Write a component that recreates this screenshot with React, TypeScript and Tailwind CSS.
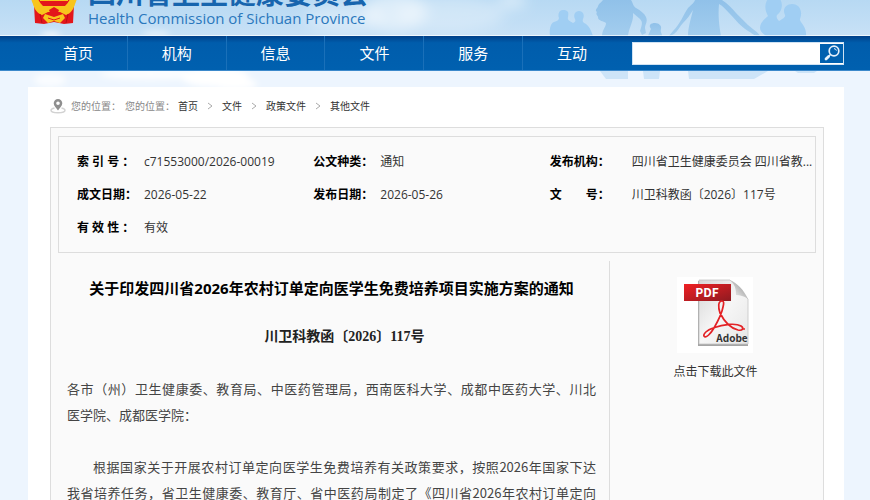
import React from "react";

const navItems = ["首页", "机构", "信息", "文件", "服务", "互动"];
const crumbs = ["首页", "文件", "政策文件", "其他文件"];

function SkyScene() {
  return (
    <svg
      aria-hidden="true"
      className="absolute inset-x-0 top-0 h-[87px] w-full"
      viewBox="0 0 870 87"
      preserveAspectRatio="xMidYMin slice"
    >
      <defs>
        <linearGradient id="sky" x1="0" y1="0" x2="0" y2="1">
          <stop offset="0" stopColor="#b7d9f3" />
          <stop offset="1" stopColor="#c8e1f6" />
        </linearGradient>
        <linearGradient id="figure" x1="0" y1="0" x2="0" y2="1">
          <stop offset="0" stopColor="#90c1e9" />
          <stop offset="1" stopColor="#a3cdee" />
        </linearGradient>
        <filter id="soft" x="-30%" y="-60%" width="160%" height="220%">
          <feGaussianBlur stdDeviation="7" />
        </filter>
        <filter id="wisp" x="-30%" y="-60%" width="160%" height="220%">
          <feGaussianBlur stdDeviation="3" />
        </filter>
        <clipPath id="skyClip">
          <rect width="870" height="36" />
        </clipPath>
      </defs>
      <rect width="870" height="87" fill="#edf5fe" />
      <g filter="url(#wisp)" fill="#ffffff">
        <ellipse cx="50" cy="80" rx="16" ry="7" opacity="0.7" />
        <ellipse cx="150" cy="74" rx="50" ry="6" opacity="0.8" />
        <ellipse cx="215" cy="77" rx="34" ry="10" />
        <ellipse cx="235" cy="84" rx="22" ry="6" />
      </g>
      <g clipPath="url(#skyClip)">
        <rect width="870" height="36" fill="url(#sky)" />
        <g filter="url(#wisp)" fill="#ffffff">
          <ellipse cx="51" cy="35" rx="10" ry="3" opacity="0.8" />
          <ellipse cx="156" cy="34" rx="14" ry="3" opacity="0.6" />
        </g>
        <g filter="url(#soft)" fill="#ffffff">
          <ellipse cx="345" cy="18" rx="40" ry="14" opacity="0.35" />
          <ellipse cx="395" cy="12" rx="32" ry="20" opacity="0.5" />
          <ellipse cx="450" cy="14" rx="55" ry="18" opacity="0.3" />
          <ellipse cx="512" cy="1" rx="14" ry="7" opacity="0.5" />
        </g>
      </g>
      <g fill="#a0cef3">
        <path d="M550 36c-1-8 1-13 4-14 3-1 5-2 5-4-1-2-1-8 4-8s6 2 5 7c-1 3 2 4 5 6 2-1 3-2 2-4-2-4 0-8 4-8s6 4 4 8c-1 3 1 4 3 5 3 2 5 6 7 12z" />
        <path d="M760 28c0-6 5-9 8-12-4-7-3-13 0-17h12c4 6 1 13-3 16-1 2 0 4 2 6 3-2 7-4 6-6-3-6 1-11 7-11 8 0 11 8 8 15-1 3 7 7 6 17h-40c-3-2-6-5-6-8z" />
      </g>
      <g fill="url(#figure)">
        <path d="M602 36c0-6 4-9 4-13-3-2-7-2-8-5 1-2-3-3-1-6-3-2 1-4 1-6 1-3 4-4 5-6h28c2 3 2 6 5 8 5 3 8 5 10 9 2 5-1 7-1 11l1 5-4 2-2-4c2-6 3-9 0-12l-7-6c1 8-4 14-5 23z" />
        <path d="M648 36c1-3 2-5 3-7-3-4 0-6 4-6s7 3 6 6c-1 3 1 4 1 7z" />
        <path d="M688 36c0-9 3-17 5-26-3 5-6 9-10 13-3 3-5 8-9 11l-6 3 5-6c8-8 10-16 15-23 4-4 6-5 7-8h27c6 4 10 8 14 13l12 12c6 5 11 8 12 11-5 1-8-3-12-5-8-5-12-11-18-17-4-4-7-8-11-10-1 12 0 20 2 32z" />
      </g>
      <g fill="#cde4f8">
        <path d="M600 71h28v8h-22z" />
        <path d="M643 71h17l-1 8h-15z" />
        <path d="M688 71h80l-14 8h-65z" />
        <path d="M795 71h22l-3 2h-16z" />
      </g>
    </svg>
  );
}

function Emblem() {
  return (
    <svg aria-hidden="true" className="h-14 w-12 shrink-0" viewBox="0 0 48 56">
      <path d="M0 22a24 24 0 0 1 48 0c0 9-3 15-7 21H7C3 37 0 31 0 22z" fill="#f8c51c" />
      <path d="M6 22a18 18 0 0 1 36 0c0 7-3 12-7 16H13C9 34 6 29 6 22z" fill="#e3161b" />
      <path d="M10 30h28v3H10z" fill="#f8c51c" />
      <path d="M4 37l5 4h30l5-4-1 18-9 1-10-2-10 2-9-1z" fill="#e3161b" />
      <path d="M3 35c6 2 9 6 15 6h12c6 0 9-4 15-6-1 6-4 10-9 12l-6-3H18l-6 3c-5-2-8-6-9-12z" fill="#f8c51c" />
      <path d="M19 42l5-3 5 3-2 5h-6z" fill="#e3161b" />
      <path d="M15 46l9 3 9-3 2 4-5 5-6-2-6 2-5-5z" fill="#f8c51c" />
      <path d="M18 50l6 2 6-2" fill="none" stroke="#e3161b" strokeWidth="1" />
      <path d="M10 46l2 9M38 46l-2 9" stroke="#b90f14" strokeWidth="1" />
    </svg>
  );
}

function SearchIcon() {
  return (
    <svg aria-hidden="true" className="h-4 w-4" viewBox="0 0 16 16" fill="none" stroke="#e6f1fb">
      <circle cx="10" cy="6" r="4.800" strokeWidth="1.700" />
      <path d="M6.300 9.700L5 11" strokeWidth="1.500" />
      <path d="M4.600 11.400L2 14" strokeWidth="2.800" strokeLinecap="round" />
      <path d="M10 3.600a2.500 2.500 0 0 1 2.400 2" strokeWidth="1" />
    </svg>
  );
}

function PinIcon() {
  return (
    <svg aria-hidden="true" className="h-4 w-4" viewBox="0 0 16 16">
      <path d="M4.500 10C2.500 10.500 1 11.300 1 12.300c0 1.500 3 2.500 7 2.500s7-1 7-2.500c0-1-1.500-1.800-3.500-2.300" fill="none" stroke="#d2d2d2" strokeWidth="1.400" />
      <path fillRule="evenodd" d="M8 1a4.300 4.300 0 0 1 4.300 4.300C12.300 8 9.500 10 8 12.500 6.500 10 3.700 8 3.700 5.300A4.300 4.300 0 0 1 8 1zm0 2.500a1.800 1.800 0 1 0 0 3.600 1.800 1.800 0 0 0 0-3.600z" fill="#8f8f8f" />
    </svg>
  );
}

function PdfIcon() {
  return (
    <svg aria-hidden="true" className="h-[76px] w-[76px]" viewBox="0 0 76 76">
      <defs>
        <linearGradient id="paper" x1="0" y1="0" x2="1" y2="1">
          <stop offset="0" stopColor="#d6d6d6" />
          <stop offset="0.5" stopColor="#f6f6f6" />
          <stop offset="1" stopColor="#e6e6e6" />
        </linearGradient>
        <linearGradient id="band" x1="0" y1="0" x2="1" y2="1">
          <stop offset="0" stopColor="#f02024" />
          <stop offset="1" stopColor="#8e1a20" />
        </linearGradient>
        <linearGradient id="fold" x1="0" y1="1" x2="1" y2="0">
          <stop offset="0" stopColor="#ffffff" />
          <stop offset="1" stopColor="#858585" />
        </linearGradient>
      </defs>
      <rect width="76" height="76" fill="#fff" />
      <path d="M21 4h32l18 19v46H21z" fill="#a5a5a5" />
      <path d="M22 3h31l18 19v45H22z" fill="url(#paper)" stroke="#c4c4c4" strokeWidth="0.800" />
      <path d="M53 3c7 3 14 10 18 19-4-3-8-4-12-4 0-6-1-11-6-15z" fill="url(#fold)" />
      <rect x="7" y="7" width="47" height="17" fill="url(#band)" />
      <text x="30" y="20" textAnchor="middle" fontFamily="Noto Sans CJK SC, sans-serif" fontWeight="700" fontSize="12" fill="#fff">PDF</text>
      <path d="M45 24c-4 0-4 6-2 12 4 8 10 15 18 17 5 1 6-2 3-4-5-3-17-2-28 2-6 2-10 6-9 8 2 3 7-3 10-8 4-7 8-15 9-21 1-4 1-6-1-6z" fill="none" stroke="#e32226" strokeWidth="1.700" />
      <circle cx="67" cy="52" r="1" fill="#e32226" />
      <text x="55" y="65" textAnchor="middle" fontFamily="Noto Sans CJK SC, sans-serif" fontWeight="700" fontSize="10" fill="#333">Adobe</text>
    </svg>
  );
}

function Chevron() {
  return (
    <svg aria-hidden="true" className="h-2 w-6" viewBox="0 0 24 8" fill="none" stroke="#aaa">
      <path d="M10 1l4 3-4 3" />
    </svg>
  );
}

function Field({ label, value, wide = false }: { label: string; value: string; wide?: boolean }) {
  return (
    <div className="flex min-w-0 whitespace-pre">
      <dt className={wide ? "w-[82px] shrink-0 font-bold text-black" : "w-[67px] shrink-0 font-bold text-black"}>{label}</dt>
      <dd>{value}</dd>
    </div>
  );
}

export default function App() {
  return (
    <div className="relative h-screen overflow-hidden bg-[#edf5fe] font-['Open_Sans','Noto_Sans_CJK_SC',sans-serif] text-[#333]">
      <SkyScene />
      <header className="relative h-9 overflow-hidden border-b border-white/70">
        <div className="flex h-full items-end gap-[10px] pl-[30px]">
          <div className="flex h-full items-end pb-[11px]">
            <Emblem />
          </div>
          <div className="flex flex-col text-[#1765ae]">
            <h1 className="text-[28px] leading-8 font-bold whitespace-nowrap">四川省卫生健康委员会</h1>
            <p className="pb-2 text-[15px] leading-[18px] whitespace-nowrap text-[#2a78bd]">Health Commission of Sichuan Province</p>
          </div>
        </div>
      </header>

      <nav className="relative flex h-[35px] items-center border-b border-[#3c89cb] bg-linear-to-b from-[#004089] via-[#005dac] via-20% to-[#0060af] pr-[26px] pl-[29px]">
        <ul className="flex h-full flex-1">
          {navItems.map((item) => (
            <li key={item} className="flex-1 border-r border-[#1a70b9] last:border-r-0">
              <a href="#" className="flex h-full items-center justify-center text-[15px] text-white">{item}</a>
            </li>
          ))}
        </ul>
        <form className="ml-[11px] flex h-[23px] w-[212px] border border-[#cfe2f3] bg-white" onSubmit={(e) => e.preventDefault()}>
          <input type="search" aria-label="搜索" className="min-w-0 flex-1 bg-white px-2 text-xs outline-none" />
          <button type="submit" aria-label="提交搜索" className="my-px flex w-[23px] items-center justify-center bg-[#0060af]">
            <SearchIcon />
          </button>
        </form>
      </nav>

      <main className="relative mt-4 mr-[26px] ml-[28px] bg-white pr-5 pb-6 pl-[22px]">
        <div className="flex h-10 items-center pb-[2px] text-[10px] text-[#888]">
          <PinIcon />
          <span className="ml-[5px]">您的位置：</span>
          <span className="ml-1">您的位置：</span>
          <nav aria-label="您的位置" className="ml-[3px] flex items-center text-[#333]">
            {crumbs.map((crumb, i) => (
              <React.Fragment key={crumb}>
                {i > 0 && <Chevron />}
                <a href="#">{crumb}</a>
              </React.Fragment>
            ))}
          </nav>
        </div>

        <div className="border border-[#ddd] bg-[#fafafa]">
          <dl className="mx-[7px] mt-2 grid grid-cols-[236fr_236fr_265fr] border border-[#ddd] py-2 pl-[18px] text-xs leading-[33px]">
            <Field label="索 引 号 ：" value="c71553000/2026-00019" />
            <Field label="公文种类：" value="通知" />
            <Field label="发布机构：" value="四川省卫生健康委员会 四川省教..." wide />
            <Field label="成文日期：" value="2026-05-22" />
            <Field label="发布日期：" value="2026-05-26" />
            <Field label="文　　号：" value="川卫科教函〔2026〕117号" wide />
            <Field label="有 效 性 ：" value="有效" />
          </dl>

          <div className="mt-2 flex">
            <article className="flex-1 border-r border-[#ddd] pt-[14px] pr-[13px] pl-4">
              <h2 className="text-center text-[15px] leading-[26px] font-bold text-black">
                关于印发四川省2026年农村订单定向医学生免费培养项目实施方案的通知
              </h2>
              <p className="mt-[23px] text-center indent-[26px] font-['Liberation_Serif','Noto_Sans_CJK_SC',serif] text-sm leading-[26px] font-bold text-[#222]">
                川卫科教函〔2026〕117号
              </p>
              <div className="mt-[26px] space-y-[26px] text-justify font-['Noto_Sans_CJK_SC',sans-serif] text-[13px] leading-[26px] text-[#444]">
                <p>
                  各市（州）卫生健康委、教育局、中医药管理局，西南医科大学、成都中医药大学、川北<span className="whitespace-nowrap">医学院、</span>成都医学院：
                </p>
                <p className="indent-[26px]">
                  根据国家关于开展农村订单定向医学生免费培养有关政策要求，按照2026年国家下达<span className="whitespace-nowrap">我省</span>培养任务，省卫生健康委、教育厅、省中医药局制定了《四川省2026年农村订单定向<span className="whitespace-nowrap">医学生</span>免费培养项目实施方案》。
                </p>
              </div>
            </article>
            <aside className="flex w-[213px] flex-col items-center pt-4 pr-[2px]">
              <a href="#" className="flex flex-col items-center gap-[10px] text-xs leading-[18px]">
                <PdfIcon />
                点击下载此文件
              </a>
            </aside>
          </div>
        </div>
      </main>
    </div>
  );
}
